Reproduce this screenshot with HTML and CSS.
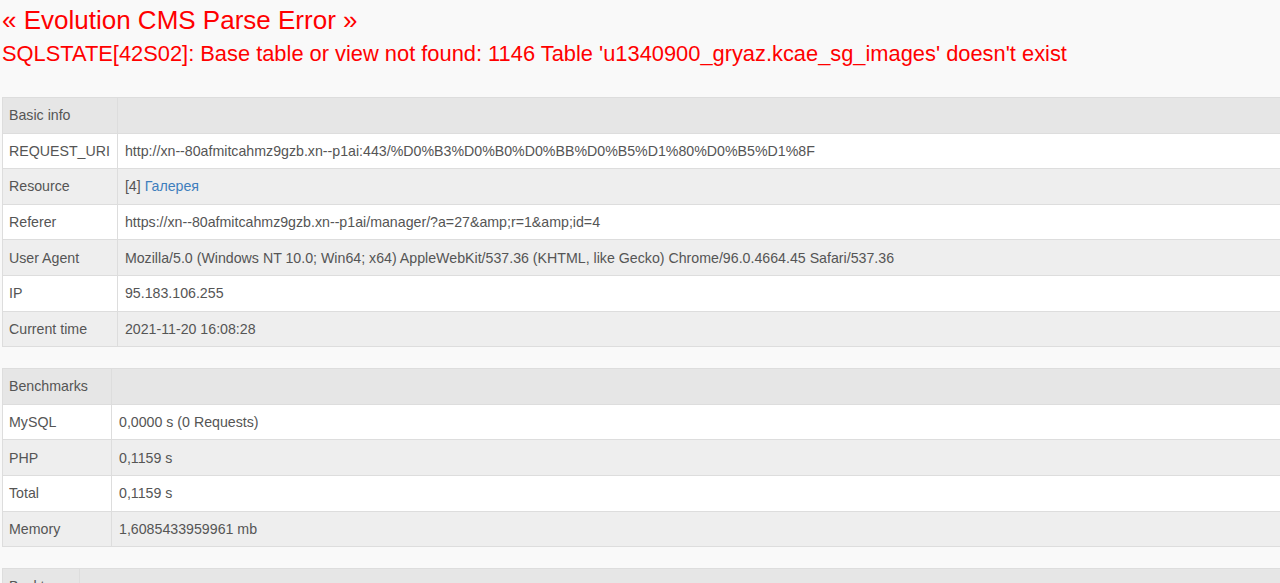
FILE: index.html
```
<!DOCTYPE html>
<html lang="en">
    <head>
        <meta charset="UTF-8">
        <meta name="viewport" content="width=device-width, initial-scale=1.0">
        <title>Evolution CMS Parse Error</title>
        <link rel="stylesheet" href="styles.css">
    </head>
    <body>
        <h2 class="err-title">&laquo; Evolution CMS Parse Error &raquo;</h2>
        <h3 class="err-msg">SQLSTATE[42S02]: Base table or view not found: 1146 Table 'u1340900_gryaz.kcae_sg_images' doesn't exist</h3>

        <table class="info">
            <thead>
            <tr>
                <th>Basic info</th>
                <th></th>
            </tr>
            </thead>
            <tbody>
            <tr>
                <td>REQUEST_URI</td>
                <td>http://xn--80afmitcahmz9gzb.xn--p1ai:443/%D0%B3%D0%B0%D0%BB%D0%B5%D1%80%D0%B5%D1%8F</td>
            </tr>
            <tr>
                <td>Resource</td>
                <td>[4] <a href="#">Галерея</a></td>
            </tr>
            <tr>
                <td>Referer</td>
                <td>https://xn--80afmitcahmz9gzb.xn--p1ai/manager/?a=27&amp;amp;r=1&amp;amp;id=4</td>
            </tr>
            <tr>
                <td>User Agent</td>
                <td>Mozilla/5.0 (Windows NT 10.0; Win64; x64) AppleWebKit/537.36 (KHTML, like Gecko) Chrome/96.0.4664.45 Safari/537.36</td>
            </tr>
            <tr>
                <td>IP</td>
                <td>95.183.106.255</td>
            </tr>
            <tr>
                <td>Current time</td>
                <td>2021-11-20 16:08:28</td>
            </tr>
            </tbody>
        </table>

        <table class="info bench">
            <thead>
            <tr>
                <th>Benchmarks</th>
                <th></th>
            </tr>
            </thead>
            <tbody>
            <tr>
                <td>MySQL</td>
                <td>0,0000 s (0 Requests)</td>
            </tr>
            <tr>
                <td>PHP</td>
                <td>0,1159 s</td>
            </tr>
            <tr>
                <td>Total</td>
                <td>0,1159 s</td>
            </tr>
            <tr>
                <td>Memory</td>
                <td>1,6085433959961 mb</td>
            </tr>
            </tbody>
        </table>

        <table class="info">
            <thead>
            <tr>
                <th>Backtrace</th>
                <th></th>
            </tr>
            </thead>
        </table>
    </body>
</html>
```

FILE: styles.css
```
html, body {
    margin: 0;
    background-color: #f9f9f9;
}
body {
    padding: 0 0 0 2px;
    font-family: "Liberation Sans", Arial, sans-serif;
    font-size: 14.2px;
    color: #555;
    overflow: hidden;
}
.err-title {
    margin: 0;
    padding-top: 4px;
    font-size: 26px;
    font-weight: normal;
    line-height: 32px;
    color: #f00;
}
.err-msg {
    margin: 0;
    padding-top: 5px;
    font-size: 21.85px;
    font-weight: normal;
    line-height: 26px;
    color: #f00;
}
.info {
    width: calc(100% + 10px);
    border-collapse: collapse;
    border: 1px solid #ddd;
    margin-bottom: 21px;
}
.err-msg + .info {
    margin-top: 30px;
}
.info th, .info td {
    padding: 7.3px 7px 7.3px 6px;
    line-height: 20px;
    text-align: left;
    font-weight: normal;
    white-space: nowrap;
    border: 1px solid #ddd;
}
.info th + th, .info td + td {
    padding-left: 7px;
}
.info th {
    background-color: #e6e6e6;
}
.info th:last-child, .info td:last-child {
    width: 100%;
}
.bench th:first-child {
    min-width: 95px;
}
.info tbody tr:nth-child(odd) {
    background-color: #fff;
}
.info tbody tr:nth-child(even) {
    background-color: #eee;
}
.info a {
    color: #3e7ebd;
    text-decoration: none;
}
```
